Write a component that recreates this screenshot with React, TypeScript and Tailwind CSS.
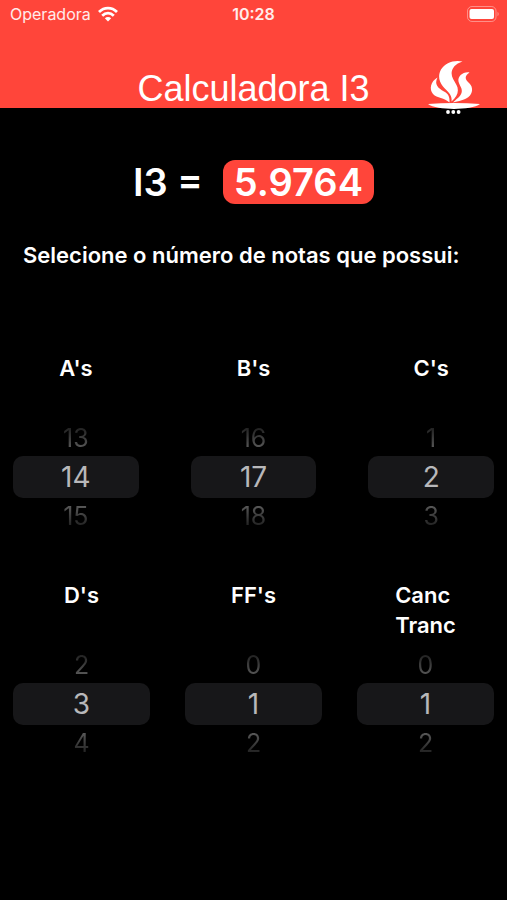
import { useState } from 'react'

type Grade = {
  id: string
  label: string[]
  value: number
}

const passGrades: Grade[] = [
  { id: 'a', label: ["A's"], value: 14 },
  { id: 'b', label: ["B's"], value: 17 },
  { id: 'c', label: ["C's"], value: 2 },
]

const otherGrades: Grade[] = [
  { id: 'd', label: ["D's"], value: 3 },
  { id: 'ff', label: ["FF's"], value: 1 },
  { id: 'canc', label: ['Canc', 'Tranc'], value: 1 },
]

function WifiIcon() {
  return (
    <svg className="h-4 w-5" viewBox="0 0 20 16" fill="none" stroke="white" strokeWidth={2.8} aria-hidden="true">
      <path d="M1 6C6.2.9 13.8.9 19 6" />
      <path d="M4.2 9.7c3.5-3.3 8.1-3.3 11.6 0" />
      <path d="M6.8 12.2c1.9-1.7 4.500-1.700 6.400 0L10 15.400z" fill="white" stroke="none" />
    </svg>
  )
}

function BatteryIcon() {
  return (
    <svg className="h-4 w-8" viewBox="0 0 32 16" fill="none" aria-hidden="true">
      <rect x="0.5" y="0.5" width="28.5" height="15" rx="4.5" stroke="white" strokeOpacity="0.4" />
      <rect x="2.5" y="3" width="24.5" height="10" rx="2" fill="white" />
      <path d="M30.5 5.8c1.6.8 1.6 3.6 0 4.4z" fill="white" fillOpacity="0.4" />
    </svg>
  )
}

function FlameLogo() {
  return (
    <svg className="h-[54px] w-[54px] shrink-0" viewBox="0 0 54 54" fill="white" role="img" aria-label="Logo">
      <path d="M35.5 1.5C27-.5 18 3 14 9.5C11 15 11.5 21 16 26.5C20.5 31.5 25.5 34.5 24.5 41.5C30.5 36.5 32.5 30.5 29.5 25C26.5 19.5 23.5 16 25 10.5C26.5 6 30.5 3 35.5 1.5Z" />
      <path d="M10.5 17.5C3.5 21.5 2 29 6 34C10 38.5 17.5 37.5 22.5 42.5C23 36.5 21 33.5 17 31.5C11 28 7 24.5 10.5 17.5Z" />
      <path d="M42.5 12.5C36 11.5 30.5 16.5 31.5 21.5C32.5 26 36 28.5 34.5 33C33 37.5 28.5 39.5 26 42.5C31 41 38.5 40.5 43 35.5C46.5 31 45.5 25.5 41 22C37.5 18.5 38 15.5 42.5 12.5Z" />
      <path d="M1 44C18 42.5 36 42.5 53 44C44 50.5 10 50.5 1 44Z" />
      <circle cx="21" cy="52" r="1.9" />
      <circle cx="26.3" cy="52" r="1.9" />
      <circle cx="31.6" cy="52" r="1.9" />
    </svg>
  )
}

function GradePicker({ id, label, value }: Grade) {
  const [count, setCount] = useState(value)

  return (
    <div className="flex min-w-0 flex-1 flex-col items-center">
      <label htmlFor={id} className="mb-[7px] flex h-[60px] flex-col text-[22px] leading-[30px] font-semibold">
        {label.map((line) => (
          <span key={line}>{line}</span>
        ))}
      </label>
      <button
        type="button"
        onClick={() => setCount(Math.max(0, count - 1))}
        className="h-9 w-full bg-linear-to-b from-[#202020] from-20% to-[#5a5a5a] to-80% bg-clip-text text-[25px] leading-9 text-transparent"
      >
        {count - 1}
      </button>
      <input
        id={id}
        type="text"
        inputMode="numeric"
        value={count}
        onChange={(e) => setCount(Number(e.target.value) || 0)}
        className="h-[42px] w-full rounded-[10px] bg-[#171719] text-center text-[28px] text-[#b8b8ba] outline-none"
      />
      <button
        type="button"
        onClick={() => setCount(count + 1)}
        className="h-9 w-full bg-linear-to-b from-[#5a5a5a] from-20% to-[#202020] to-80% bg-clip-text text-[25px] leading-9 text-transparent"
      >
        {count + 1}
      </button>
    </div>
  )
}

export default function App() {
  return (
    <div className="min-h-screen bg-black font-['Inter','Liberation_Sans',sans-serif] text-white">
      <header className="h-[108px] bg-[#ff453a]">
        {/* Status bar */}
        <div className="grid h-7 grid-cols-3 items-center px-2 text-base text-white/90">
          <div className="flex items-center gap-[7px] pl-[2px]">
            <span>Operadora</span>
            <WifiIcon />
          </div>
          <span className="text-center font-semibold">10:28</span>
          <div className="flex justify-end">
            <BatteryIcon />
          </div>
        </div>

        <div className="grid grid-cols-[1fr_auto_1fr] pt-8">
          <h1 className="col-start-2 pt-1 font-['Liberation_Sans',sans-serif] text-[36px] leading-[50px]">
            Calculadora I3
          </h1>
          <div className="flex justify-end pr-[26px]">
            <FlameLogo />
          </div>
        </div>
      </header>

      <main>
        <div className="flex items-center justify-center gap-5 pt-[52px] text-[38px] leading-[44px] font-semibold">
          <span>I3 =</span>
          <output className="rounded-xl bg-[#ff453a] px-[11px]">5.9764</output>
        </div>

        <p className="px-[23px] pt-9 text-[22px] leading-[30px] font-semibold">Selecione o número de notas que possui:</p>

        <div className="flex gap-[52px] px-[13px] pt-[83px]">
          {passGrades.map((grade) => (
            <GradePicker key={grade.id} {...grade} />
          ))}
        </div>
        <div className="flex gap-[35px] px-[13px] pt-[46px]">
          {otherGrades.map((grade) => (
            <GradePicker key={grade.id} {...grade} />
          ))}
        </div>
      </main>
    </div>
  )
}
